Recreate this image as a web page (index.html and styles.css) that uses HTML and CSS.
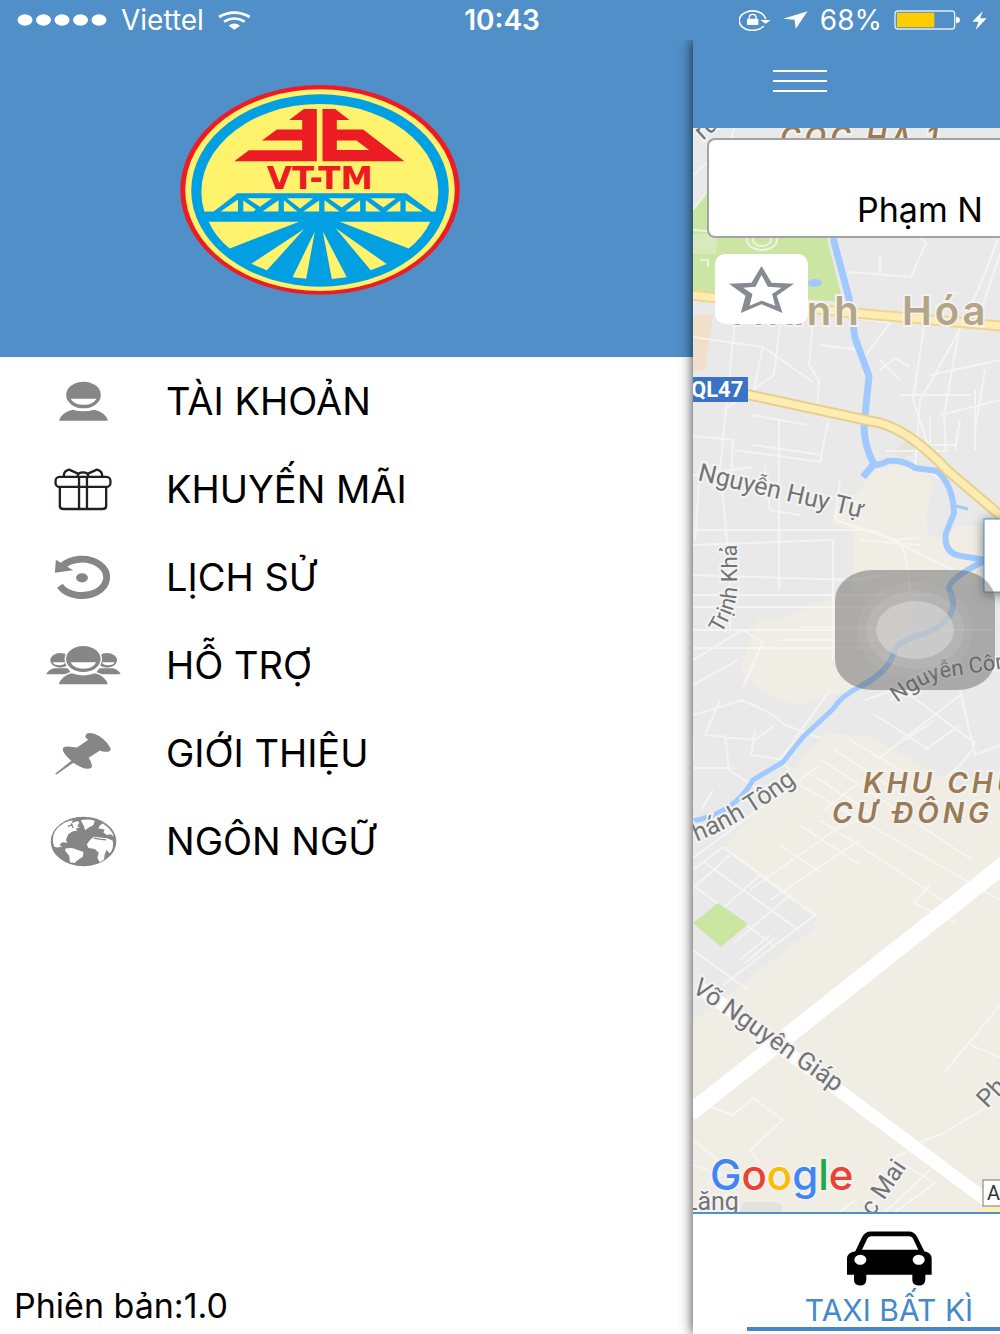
FILE: index.html
```html
<!DOCTYPE html>
<html lang="vi">
<head>
<meta charset="utf-8">
<meta name="viewport" content="width=device-width, initial-scale=1">
<title>VT-TM Taxi</title>
<link rel="stylesheet" href="styles.css">
</head>
<body>
<div class="app">
  <header class="status">
    <div class="status-left">
      <svg class="signal" width="90" height="12" viewBox="0 0 90 12" fill="#fff" aria-hidden="true"><ellipse cx="8" cy="6" rx="7.5" ry="5.7"/><ellipse cx="26.5" cy="6" rx="7.5" ry="5.7"/><ellipse cx="45" cy="6" rx="7.5" ry="5.7"/><ellipse cx="63.5" cy="6" rx="7.5" ry="5.7"/><ellipse cx="82" cy="6" rx="7.5" ry="5.7"/></svg>
      <span>Viettel</span>
      <svg class="wifi" width="33" height="19" viewBox="689 32 99 57" aria-hidden="true"><g fill="none" stroke="#fff" stroke-width="8"><path d="M692 50q46-26 92 0M707 64q31-19 62 0"/></g><path d="M721 76q17-13 34 0l-17 12z" fill="#fff"/></svg>
    </div>
    <strong class="clock">10:43</strong>
    <div class="status-right">
      <svg width="32" height="22" viewBox="110 28 96 66" aria-hidden="true"><path d="M184 79A40 29 0 1 1 190 58" fill="none" stroke="#fff" stroke-width="5"/><path d="M174 61h31l-15 11z" fill="#fff"/><rect x="134" y="57" width="34" height="19" rx="2" fill="#fff"/><path d="M141 58v-6q0-8 10-8t10 8v6" fill="none" stroke="#fff" stroke-width="4"/></svg>
      <svg width="25" height="18" viewBox="252 35 74 54" aria-hidden="true"><path d="M325 36l-35 52-4-27-34-3z" fill="#fff"/></svg>
      <span>68%</span>
      <svg width="66" height="20" viewBox="594 32 198 60" aria-hidden="true"><rect x="597" y="35" width="179" height="54" rx="9" fill="none" stroke="#e3edf7" stroke-width="4"/><path d="M603 40h112v44H603z" fill="#fc0"/><path d="M780 52q12 1 12 10t-12 10z" fill="#fff"/></svg>
      <svg width="15" height="19" viewBox="814 32 46 58" aria-hidden="true"><path d="M847 32l-32 33h19l-9 25 34-36h-20z" fill="#fff"/></svg>
    </div>
  </header>

  <div class="body">
    <aside class="drawer">
      <div class="brand">
        <svg class="logo" width="280" height="210" viewBox="30 30 841 631" role="img" aria-label="VT-TM">
          <ellipse cx="450.500" cy="345" rx="420" ry="315" fill="#ed1c24"/>
          <ellipse cx="450.500" cy="346" rx="405" ry="303" fill="#fff26d"/>
          <ellipse cx="450.500" cy="347" rx="387" ry="289" fill="#00a0e3"/>
          <path d="M103 411A356 265 0 1 1 797 411z" fill="#fff26d"/>
          <g fill="#ed1c24">
            <path d="M402 102h39v157H193l44-33h160v-29H276l45-33h76v-29h-39z"/>
            <path d="M458 102h38l43 33h-38v29h79l124 95H458zM501 197v28h97l-38-28z" fill-rule="evenodd"/>
            <text class="logo-text" x="450" y="341" text-anchor="middle">VT-TM</text>
          </g>
          <path d="M103 411h27l72-56h508l75 56h12v29H103z" fill="#00a0e3"/>
          <g fill="#fff26d">
            <path d="M152 410l52-36v36zM231 370h75l-36 26zM220 377l38 27-8 6h-30zM326 376v34h-48zM351 370h79l-39 31zM342 376l40 34h-40zM448 377v33h-48zM476 370h78l-38 28zM464 376l45 34h-45zM571 376v34h-45zM602 370h77l-38 28zM588 376l45 34h-45zM692 377v33h-43zM708 376l51 34h-51z"/>
            <path d="M116 441h272l-209 80Q137 488 116 441zM782 441H510l207 80Q760 488 782 441zM403 463L244 567l47 20zM497 460l154 108-48 19zM435 470l-67 138 41 4zM459 470l72 138-45 5z"/>
          </g>
        </svg>
      </div>
      <nav class="menu" aria-label="Menu">
        <a class="menu-item" href="#account">
          <svg width="49" height="40" viewBox="85 62 147 120" aria-hidden="true"><g fill="#868686"><ellipse cx="158.500" cy="104" rx="52" ry="40"/><path d="M85 181q6-24 41-33 32 9 65 0 35 9 41 33z"/></g><path d="M120 115h77q-8 18-38 18t-39-18z" fill="#fff"/></svg>
          <span>TÀI KHOẢN</span>
        </a>
        <a class="menu-item" href="#promo">
          <svg width="58" height="43" viewBox="72 322 174 130" fill="none" stroke="#231f20" stroke-width="7" stroke-linejoin="round" aria-hidden="true"><rect x="76" y="349" width="166" height="30" rx="12"/><path d="M89 380v57q0 9 11 9h118q11 0 11-9v-57M147 349v97M171 349v97M101 347q-1-16 16-20l27 12M217 347q1-16-16-20l-27 12M143 348q0-13 16-13t16 13"/></svg>
          <span>KHUYẾN MÃI</span>
        </a>
        <a class="menu-item" href="#history">
          <svg width="58" height="45" viewBox="72 582 174 136" aria-hidden="true"><path d="M94 618A75 55 0 1 1 89 675" fill="none" stroke="#868686" stroke-width="21"/><path d="M77 596l52 32-55 8z" fill="#868686"/><ellipse cx="156" cy="651" rx="18" ry="14" fill="#868686"/></svg>
          <span>LỊCH SỬ</span>
        </a>
        <a class="menu-item" href="#support">
          <svg width="75" height="40" viewBox="46 74 226 120" aria-hidden="true"><g fill="#868686"><ellipse cx="89" cy="120" rx="30" ry="22"/><ellipse cx="230" cy="120" rx="30" ry="22"/><path d="M47 162q6-14 24-18h40l14 18zM271 162q-6-14-24-18h-40l-14 18z"/></g><path d="M66 126h38q-2 9-18 9t-20-9zM215 126h38q-4 9-20 9t-18-9z" fill="#fff"/><g fill="#868686" stroke="#fff" stroke-width="9" paint-order="stroke"><ellipse cx="158.500" cy="116" rx="52" ry="39"/><path d="M85 192q6-24 38-33 36 13 71 0 32 9 38 33z"/></g><path d="M120 126h77q-8 19-38 19t-39-19z" fill="#fff"/></svg>
          <span>HỖ TRỢ</span>
        </a>
        <a class="menu-item" href="#about">
          <svg width="56" height="43" viewBox="76 334 168 128" aria-hidden="true"><path d="M167 349q0-18 27-10 30 11 48 42 4 12-14 12-10 0-17-4l-34 22q12 18 9 29-12 8-31-1-11-4-24-13l-51 35q-4-1-2-4l47-37q-26-21-26-36 4-9 24-6l19 2 34-23q-5-3-9-8z" fill="#868686"/></svg>
          <span>GIỚI THIỆU</span>
        </a>
        <a class="menu-item" href="#language">
          <svg width="67" height="51" viewBox="58 586 202 154" aria-hidden="true"><ellipse cx="159" cy="663" rx="97" ry="73" fill="#868686" stroke="#868686" stroke-width="4"/><g fill="#fff"><path d="M70 678q-14-44 29-70 22-11 28-8l-5 9 9-4 9-4 7 5-7 11 8 4-12 2 4 7-15 3-12 8-7 17 4 9-14-2-9 7 8 9q-10-4-13 1z"/><path d="M151 599q20-5 42 1l-4 13-14 8-11 8-4-13z"/><path d="M104 684q22-3 28 1l27 10-2 14-15 10-10 9-14-2-2-20-12-14z"/><path d="M217 609q27 16 33 39l-9-7-11 2-11-7 4-9-19-3 4-9z"/><path d="M178 659l12-10 18 2 22 2 17 7q5 24-9 39l-9-11-6 14-2 15-13 9-7-14 4-15-12-11-19-3-5-11z"/></g><path d="M180 625l14 4-9 7 12 1M190 653l17 3 20 2M112 617l14-5M122 609l6 13" fill="none" stroke="#868686" stroke-width="4"/></svg>
          <span>NGÔN NGỮ</span>
        </a>
      </nav>
      <p class="version">Phiên bản:1.0</p>
    </aside>

    <main class="panel">
      <div class="topbar">
        <button class="burger" type="button" aria-label="Menu"><i></i><i></i><i></i></button>
      </div>
      <section class="map" aria-label="Bản đồ">
        <svg class="map-art" viewBox="693 128 307 1084" preserveAspectRatio="xMinYMin slice">
          <rect x="693" y="128" width="1200" height="1500" fill="#e9e9e9"/>
          <g fill="#f0ede5">
            <path d="M876 470l30-8 20 10 8 14-8 26 2 22 10 4 20-12h43v60h-80l-29 90-94 30-38-15-20-22 18-50 20 1 75-30v-60l-20-6v-16l12-1z"/>
            <path d="M827 733l45 4 86 50 42-17v442H693V1020l123-93-93-79z"/>
          </g>
          <path d="M693 910l12-62 18 1 93 70-5 12-118 90z" fill="#e9e9e9"/>
          <path d="M893 452l20-17 15 8-25 16z" fill="#e4e3dc"/>
          <path d="M693 209l14-18 120 47 16 64-150-10z" fill="#cbe6a2"/>
          <path d="M693 234h25l-2 20h-23z" fill="#d8e9bd"/>
          <path d="M693 315h20l-8 56h-12z" fill="#f0dfca"/>
          <path d="M743 1202h33l6 3v7h-42z" fill="#e2e3dd"/>
          <ellipse cx="815" cy="283" rx="7" ry="4" fill="#a0caff"/>
          <g fill="none" stroke="#f8f8f8" stroke-width="2" opacity=".75">
            <path d="M693 175l14-12M693 210l14-18M734 128l-3 12M693 230l30 2M700 260h8v7"/>
            <ellipse cx="762" cy="240" rx="15" ry="10"/><ellipse cx="762" cy="240" rx="9" ry="6"/>
            <path d="M849 272l62 5 15-34-15-16M880 256v18M1000 230q-20 70-80 170l-5 70M1000 254l-20 60M693 337l70 10-10 45M763 347l50 35M735 320l-15 150 10 100v60M780 325l-6 50-50 35M813 320l-4 45 10 15-2 35M820 345l40 5M840 315l50 8-30 40M880 370l15-12 15 9M925 320l-12 80 20 60M960 325l-16 90 2 36-60 0M1000 360l-70 15M1000 400l-60 15M900 395h70M985 370l-10 60M880 360l20 20"/>
            <path d="M693 436l40 4-2 40M735 450l85 12 8-40M693 475l60-8M752 415l55 10M753 445l70 10M693 530h180l80 40M693 545l140-5v120M779 420v170M693 575l160 5 50-8M693 595h240M693 607h220M693 630h300M693 648h180M780 640h120v10M800 627h80M693 660l50-30 20 12-20 45M693 685l45-25M700 470l-5 70M765 465l5 45 30 5M840 480l-5 40 60 20q15 5 15 70v40M890 540l30-2M860 540l60 5M900 460l45 20M930 415v30h25M960 420l-5 30M975 390v60"/>
            <path d="M740 700q30 10 45 25l35 13M693 715l50-15M720 700l-15 35 50 5 20-15M725 735l4 35 30 20M755 730l-4 25 28 4M693 768h40M713 790l-12 20M693 800l-2 10M693 740l-5 110M830 690l-50 70 10 10M865 700l35-12 75 55q-5 15-30 35M960 695l-83 65M875 715l55 35M890 700l20-10M905 740l30-20M925 750l35-25M960 690l15 65 25-10M820 765l-130 95M822 760l150 100M835 750l60 40M850 740l60 36M813 775l60 40-40 15M855 785l-30 25M800 785l200 115M820 820l130 85M835 830l-85 60M860 840l-90 60M780 845l40 27M800 825l60 40M930 885l-16 18 42 20"/>
            <path d="M693 870l30-23 92 68-92 70M704 862l95 68M693 885l80 60M730 855l-50 45M760 875l-50 45M790 895l-55 47M693 950l55 40M770 935l-30 25M775 938l-30 25M1000 1005l-55 67M970 1045l30 12M990 1105l-50 30-30 10M693 1100l40 15 20-17 30 22-33 30 10 14M910 1150l-20 10M905 1165l30 18-40 29M930 1170l-45 42M855 1200l-15 12M693 1140l25 20-10 25M693 1165l30 10"/>
          </g>
          <path d="M693 923l25-20 30 21-27 23z" fill="#cbe6a2"/>
          <path d="M690 1113L1010 860" fill="none" stroke="#fff" stroke-width="17"/>
          <path d="M700 988l145 107 145 108" fill="none" stroke="#fff" stroke-width="13"/>
          <g fill="none" stroke="#a0caff" stroke-linejoin="round">
            <path d="M833 238l16 60 6 40 14 38-5 50q0 20 10 38l-11 13" stroke-width="7"/>
            <path d="M870 466q10-1 18-5 15-2 27 7l22 3q16 14 17 42l-8 20q-3 20 15 23l25 4q-38 19-37 29 14 27-20 43-30 8-34 18-6 22-34 36" stroke-width="6"/>
            <path d="M952 505l16 4" stroke-width="3"/>
            <path d="M861 686q-20 10-28 23l-30 28-20 25-30 18q-18 33-60 41" stroke-width="5"/>
          </g>
          <g fill="none">
            <path d="M690 295l153 17 167 15" stroke="#f0d58c" stroke-width="11"/><path d="M690 295l153 17 167 15" stroke="#ffecb3" stroke-width="7"/>
            <path d="M745 394l125 27q35 4 78 50l66 56" stroke="#e6cf8b" stroke-width="11"/><path d="M745 394l125 27q35 4 78 50l66 56" stroke="#ffecb3" stroke-width="7"/>
          </g>
          <g class="place">
            <text class="city" x="724" y="325">Thanh</text>
            <text class="city" x="902" y="325">Hóa</text>
            <text class="area" x="780" y="147">CỌC HẠ 1</text>
            <text class="area" x="863" y="793">KHU CHUNG</text>
            <text class="area" x="832" y="823">CƯ ĐÔNG</text>
          </g>
          <g class="road">
            <text transform="translate(703 141) rotate(-42)">ru</text>
            <text transform="translate(697 480) rotate(13)">Nguyễn Huy Tự</text>
            <path id="road-tk" d="M721 634Q736 609 737 590V530" fill="none" stroke="none"/>
            <text class="small"><textPath href="#road-tk">Trịnh Khả</textPath></text>
            <path id="road-nc" d="M897 703Q925 681 947 677L1060 660" fill="none" stroke="none"/>
            <text class="small"><textPath href="#road-nc">Nguyễn Công</textPath></text>
            <path id="road-tt" d="M683 847Q735 829 797 782L840 745" fill="none" stroke="none"/>
            <text><textPath href="#road-tt">Thánh Tông</textPath></text>
            <text transform="translate(691 991) rotate(35)">Võ Nguyên Giáp</text>
            <text transform="translate(873 1217) rotate(-56)">c Mai</text>
            <text transform="translate(987 1109) rotate(-46)">Ph</text>
            <text x="684" y="1210">Lăng</text>
          </g>
          <path d="M693 377h55v25h-55z" fill="#3873c6"/>
          <text class="shield" x="691" y="397">QL47</text>
          <path d="M982 1207h30v8h-36z" fill="#ffecb3"/>
          <rect x="983" y="1180" width="40" height="26" fill="#fff" stroke="#777"/>
          <text class="shield-dark" x="987" y="1200">AH1</text>
          <rect class="callout" x="984" y="519" width="60" height="73" fill="#fff" stroke="#4c90cf"/>
          <text class="google" x="710" y="1190"><tspan fill="#4285f4">G</tspan><tspan fill="#ea4335">o</tspan><tspan fill="#fbbc05">o</tspan><tspan fill="#4285f4">g</tspan><tspan fill="#22a845">l</tspan><tspan fill="#ea4335">e</tspan></text>
        </svg>
        <div class="controls">
          <input class="address" type="text" aria-label="Địa chỉ đón" value="Phạm N">
          <button class="favorite" type="button" aria-label="Yêu thích">
            <svg width="65" height="47" viewBox="146 436 195 141" aria-hidden="true"><path d="M243.500 436l30 50 68 3-52 36 17 52-63-26-62 26 14-52-50-36 68-3zM243.500 463l-18 35-37 3 28 19-9 35 36-15 41 15-9-35 28-19-41-3z" fill="#858b91" fill-rule="evenodd"/></svg>
          </button>
        </div>
        <button class="assistive" type="button" aria-label="AssistiveTouch"><i></i></button>
      </section>
      <nav class="tabs" aria-label="Loại xe">
        <a class="tab" href="#taxi">
          <svg width="85" height="55" viewBox="500 691 255 164" aria-hidden="true"><path d="M525 751l20-42q9-17 26-17h114q18 0 26 17l21 42q22 4 22 22v49h-19v14q0 18-20 18t-19-18v-14H558v14q0 18-19 18t-18-18v-14h-21v-49q0-18 25-22zM545 747h169l-15-32q-4-9-13-9H573q-9 0-13 9zM540 762a18 15 0 1 0 .1 0zM715 762a18 15 0 1 0 .1 0z" fill-rule="evenodd"/></svg>
          <span>TAXI BẤT KÌ</span>
        </a>
      </nav>
    </main>
  </div>
</div>
</body>
</html>
```
FILE: styles.css
```css
* { box-sizing: border-box; }

body {
  margin: 0;
  font-family: Inter, "Noto Sans", sans-serif;
  color: #000;
  background: #fff;
}

svg { display: block; flex: none; }
a { color: inherit; text-decoration: none; }
button { border: 0; padding: 0; background: none; font: inherit; cursor: pointer; }

.app {
  display: flex;
  flex-direction: column;
  min-height: 100vh;
}

/* status bar */
.status {
  display: grid;
  grid-template-columns: 1fr auto 1fr;
  align-items: center;
  height: 40px;
  padding: 0 13px 0 17px;
  color: #fff;
  background: #508fc7;
  font-size: 28px;
  line-height: 40px;
  position: relative;
  z-index: 2;
}
.status-left, .status-right { display: flex; align-items: center; }
.status-left { gap: 14px; }
.status-right { justify-content: flex-end; gap: 12px; }
.clock { font-weight: 600; }

.body {
  flex: 1;
  display: grid;
  grid-template-columns: 693fr 307fr;
}

/* drawer */
.drawer {
  display: flex;
  flex-direction: column;
  min-width: 0;
}
.brand {
  height: 317px;
  padding: 45px 0 0 180px;
  background: #508fc7;
}
.logo-text { font: bold 98px "DejaVu Sans", sans-serif; }
.menu { display: flex; flex-direction: column; }
.menu-item {
  display: grid;
  grid-template-columns: 166px 1fr;
  align-items: center;
  height: 88px;
  font-size: 38px;
  line-height: 44px;
}
.menu-item svg { justify-self: center; }
.version {
  margin: auto 0 0;
  padding: 0 14px 8px;
  font-size: 34px;
  line-height: 40px;
}

/* page behind the drawer */
.panel {
  display: flex;
  flex-direction: column;
  min-width: 0;
  clip-path: inset(0 0 0 -16px);
  background: #fff;
  box-shadow: 0 0 12px rgba(0, 0, 0, .8);
}
.topbar {
  display: flex;
  align-items: center;
  height: 88px;
  padding: 0 80px 6px;
  background: #508fc7;
}
.burger {
  display: flex;
  flex-direction: column;
  gap: 8px;
  width: 54px;
}
.burger i { height: 2px; background: #fff; }

.map {
  position: relative;
  flex: 1;
  min-height: 1084px;
  overflow: hidden;
}
.map-art { width: 100%; height: 100%; position: absolute; inset: 0; }
.place { paint-order: stroke; stroke: #f3f2ee; stroke-width: 4px; }
.city { font-size: 40px; font-weight: 600; letter-spacing: 3px; fill: #b3a686; }
.area { font-size: 28px; font-weight: 600; font-style: italic; letter-spacing: 4px; fill: #9b7b55; }
.road { font-family: Roboto, sans-serif; font-size: 25px; fill: #737373; }
.road text { paint-order: stroke; stroke: #f3f3f3; stroke-width: 4px; }
.road .small { font-size: 22px; }
.shield { font: bold 22px Roboto, sans-serif; fill: #fff; }
.shield-dark { font: 20px Roboto, sans-serif; fill: #333; }
.callout { filter: drop-shadow(0 2px 6px rgba(0, 0, 0, .5)); }
.google { font-size: 42px; font-weight: 500; paint-order: stroke; stroke: #f3f1ec; stroke-width: 4px; }

/* controls lying over the map */
.controls {
  position: absolute;
  inset: 10px 0 auto 14px;
  display: flex;
  flex-direction: column;
  align-items: flex-start;
  gap: 16px;
}
.address {
  width: 100%;
  height: 100px;
  padding: 42px 0 0 148px;
  border: 2px solid #a3a3a3;
  border-right: 0;
  border-radius: 8px 0 0 8px;
  font: 34px/40px Inter, "Noto Sans", sans-serif;
  color: #000;
  background: #fff;
}
.favorite {
  display: grid;
  place-items: center;
  width: 93px;
  height: 70px;
  margin-left: 8px;
  border-radius: 10px;
  background: #fff;
}
.assistive {
  position: absolute;
  left: 142px;
  top: 442px;
  display: grid;
  place-items: center;
  width: 160px;
  height: 120px;
  border-radius: 38px / 30px;
  background: rgba(90, 90, 90, .45);
}
.assistive i {
  width: 78px;
  height: 58px;
  border-radius: 50%;
  background: rgba(225, 225, 225, .6);
  box-shadow: 0 0 0 10px rgba(220, 220, 220, .15), 0 0 0 19px rgba(220, 220, 220, .1);
}

/* vehicle tabs */
.tabs {
  display: flex;
  height: 122px;
  padding: 0 0 3px 54px;
  border-top: 2px solid #4c90cf;
  overflow: hidden;
}
.tab {
  flex: none;
  display: flex;
  flex-direction: column;
  align-items: center;
  gap: 8px;
  width: 284px;
  padding-top: 17px;
  border-bottom: 4px solid #4489c8;
  color: #4489c8;
  font-size: 30px;
  line-height: 32px;
}
.tab svg { fill: #000; }
```
